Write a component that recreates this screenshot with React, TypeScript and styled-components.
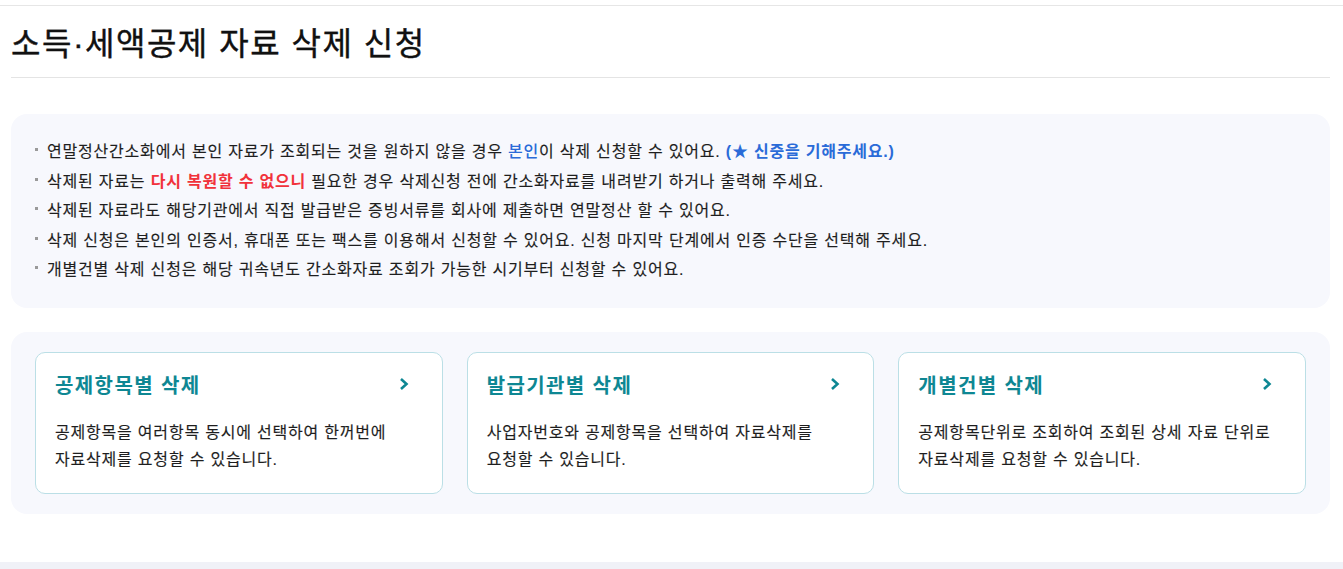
import React from "react";
import styled, { createGlobalStyle } from "styled-components";

const GlobalStyle = createGlobalStyle`
  html, body { margin: 0; padding: 0; background: #ffffff; }
  body {
    font-family: "Liberation Sans", "Noto Sans CJK KR", sans-serif;
    color: #222222;
    -webkit-font-smoothing: antialiased;
    word-break: keep-all;
  }
  * { box-sizing: border-box; }
`;

const Page = styled.div`
  display: flex;
  flex-direction: column;
  min-height: 569px;
`;

const TopRule = styled.div`
  height: 6px;
  border-bottom: 1px solid #e6e6e6;
`;

const Content = styled.main`
  display: flex;
  flex-direction: column;
  padding: 0 13px 48px 11px;
`;

const Header = styled.header`
  height: 72px;
  display: flex;
  align-items: center;
  border-bottom: 1px solid #e4e4e4;
`;

const Title = styled.h1`
  margin: 0;
  font-size: 32px;
  font-weight: 400;
  color: #111111;
  letter-spacing: 1.5px;
  padding-bottom: 2px;
  -webkit-text-stroke: 0.4px #111111;
`;

const Panel = styled.section<{ $mt: number; $pad: string }>`
  margin-top: ${(p) => p.$mt}px;
  background: #f7f8fd;
  border-radius: 16px;
  padding: ${(p) => p.$pad};
`;

const NoticeList = styled.ul`
  margin: 0;
  padding: 0;
  list-style: none;
  display: flex;
  flex-direction: column;
`;

const NoticeItem = styled.li`
  display: flex;
  align-items: center;
  font-size: 16px;
  line-height: 29.5px;
  color: #1e1e1e;
  letter-spacing: 0.8px;
  -webkit-text-stroke: 0.15px #1e1e1e;
  &::before {
    content: "";
    width: 3px;
    height: 3px;
    background: #9a9a9a;
    margin-right: 9px;
    margin-bottom: 4px;
    flex: none;
  }
`;

const Em = styled.strong<{ $tone: "blue" | "red" }>`
  font-weight: ${(p) => (p.$tone === "red" ? 700 : 500)};
  color: ${(p) => (p.$tone === "red" ? "#f1323b" : "#2a6bd8")};
  -webkit-text-stroke: 0;
  white-space: pre;
`;

const Strong = styled.strong`
  font-weight: 700;
  color: #2a6bd8;
  -webkit-text-stroke: 0;
  white-space: pre;
`;

const CardGrid = styled.div`
  display: grid;
  grid-template-columns: repeat(3, 1fr);
  gap: 24px;
`;

const Card = styled.a`
  display: flex;
  flex-direction: column;
  gap: 19px;
  height: 142px;
  padding: 19px 32px 19px 19px;
  background: #ffffff;
  border: 1px solid #bbdfe6;
  border-radius: 10px;
  text-decoration: none;
  cursor: pointer;
`;

const CardHead = styled.div`
  display: flex;
  align-items: center;
  justify-content: space-between;
`;

const CardTitle = styled.h2`
  margin: 0;
  font-size: 20px;
  line-height: 28px;
  font-weight: 700;
  color: #0e8793;
  letter-spacing: 1.4px;
`;

const Chevron = styled.svg`
  width: 10px;
  height: 14px;
  margin-bottom: 4px;
  margin-right: 1px;
  flex: none;
`;

const CardDesc = styled.p`
  margin: 0 -8px 0 0;
  font-size: 16px;
  line-height: 27px;
  color: #1e1e1e;
  letter-spacing: 0.8px;
  -webkit-text-stroke: 0.15px #1e1e1e;
`;

const Footer = styled.footer`
  margin-top: auto;
  height: 7px;
  background: #f0f1f7;
`;

const cards = [
  {
    title: "공제항목별 삭제",
    desc: "공제항목을 여러항목 동시에 선택하여 한꺼번에 자료삭제를 요청할 수 있습니다.",
  },
  {
    title: "발급기관별 삭제",
    desc: "사업자번호와 공제항목을 선택하여 자료삭제를 요청할 수 있습니다.",
  },
  {
    title: "개별건별 삭제",
    desc: "공제항목단위로 조회하여 조회된 상세 자료 단위로 자료삭제를 요청할 수 있습니다.",
  },
];

export default function App() {
  return (
    <Page>
      <GlobalStyle />
      <TopRule />
      <Content>
        <Header>
          <Title>소득·세액공제 자료 삭제 신청</Title>
        </Header>
        <Panel $mt={36} $pad="23px 24px 23px 24px">
          <NoticeList>
            <NoticeItem>
              <span>
                연말정산간소화에서 본인 자료가 조회되는 것을 원하지 않을 경우{" "}
                <Em $tone="blue">본인</Em>이 삭제 신청할 수 있어요.{" "}
                <Strong>(★ 신중을 기해주세요.)</Strong>
              </span>
            </NoticeItem>
            <NoticeItem>
              <span>
                삭제된 자료는 <Em $tone="red">다시 복원할 수 없으니</Em> 필요한 경우 삭제신청 전에
                간소화자료를 내려받기 하거나 출력해 주세요.
              </span>
            </NoticeItem>
            <NoticeItem>
              삭제된 자료라도 해당기관에서 직접 발급받은 증빙서류를 회사에 제출하면 연말정산 할 수 있어요.
            </NoticeItem>
            <NoticeItem>
              삭제 신청은 본인의 인증서, 휴대폰 또는 팩스를 이용해서 신청할 수 있어요. 신청 마지막
              단계에서 인증 수단을 선택해 주세요.
            </NoticeItem>
            <NoticeItem>
              개별건별 삭제 신청은 해당 귀속년도 간소화자료 조회가 가능한 시기부터 신청할 수 있어요.
            </NoticeItem>
          </NoticeList>
        </Panel>
        <Panel $mt={24} $pad="20px 24px">
          <CardGrid>
            {cards.map((c) => (
              <Card key={c.title}>
                <CardHead>
                  <CardTitle>{c.title}</CardTitle>
                  <Chevron viewBox="0 0 10 14" aria-hidden>
                    <path
                      d="M2 2 L7.5 7 L2 12"
                      fill="none"
                      stroke="#0e8793"
                      strokeWidth="2.6"
                      strokeLinecap="butt"
                      strokeLinejoin="miter"
                    />
                  </Chevron>
                </CardHead>
                <CardDesc>{c.desc}</CardDesc>
              </Card>
            ))}
          </CardGrid>
        </Panel>
      </Content>
      <Footer />
    </Page>
  );
}
